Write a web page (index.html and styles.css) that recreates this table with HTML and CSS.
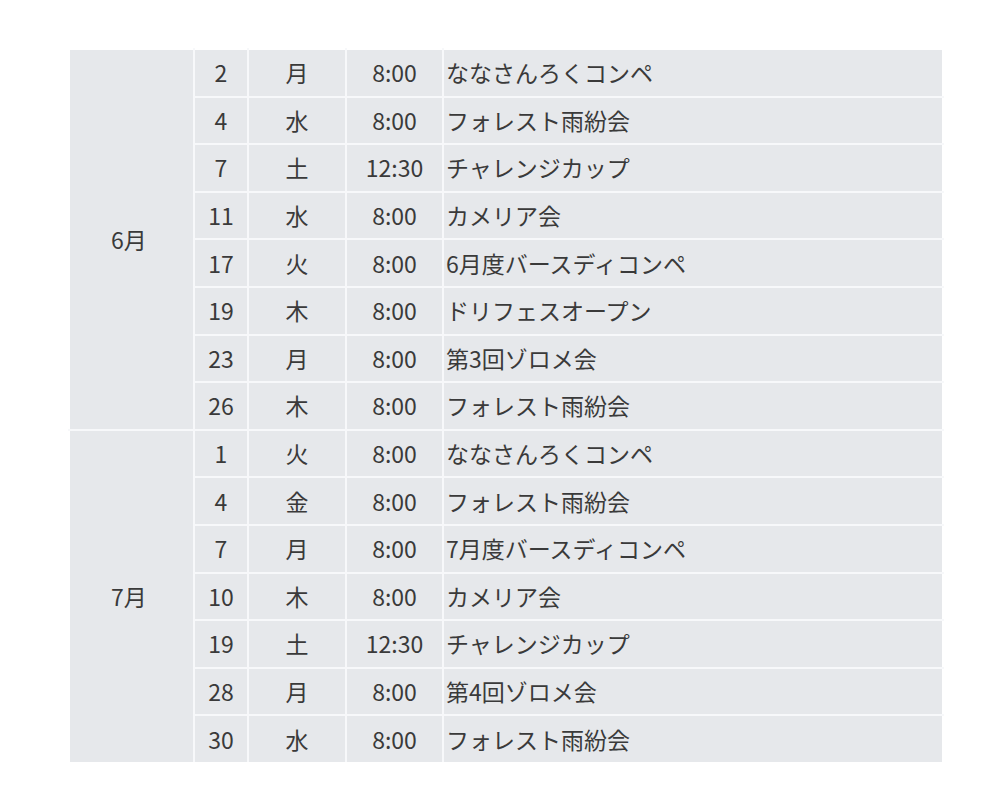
FILE: index.html
```html
<!DOCTYPE html>
<html lang="ja">
<head>
<meta charset="utf-8">
<link rel="stylesheet" href="styles.css">
</head>
<body>
<table class="schedule">
  <colgroup>
    <col class="c-month"><col class="c-day"><col class="c-wd"><col class="c-time"><col class="c-event">
  </colgroup>
  <tbody>
    <tr><td class="month" rowspan="8">6月</td><td>2</td><td>月</td><td>8:00</td><td class="event">ななさんろくコンペ</td></tr>
    <tr><td>4</td><td>水</td><td>8:00</td><td class="event">フォレスト雨紛会</td></tr>
    <tr><td>7</td><td>土</td><td>12:30</td><td class="event">チャレンジカップ</td></tr>
    <tr><td>11</td><td>水</td><td>8:00</td><td class="event">カメリア会</td></tr>
    <tr><td>17</td><td>火</td><td>8:00</td><td class="event">6月度バースディコンペ</td></tr>
    <tr><td>19</td><td>木</td><td>8:00</td><td class="event">ドリフェスオープン</td></tr>
    <tr><td>23</td><td>月</td><td>8:00</td><td class="event">第3回ゾロメ会</td></tr>
    <tr><td>26</td><td>木</td><td>8:00</td><td class="event">フォレスト雨紛会</td></tr>
    <tr><td class="month month-last" rowspan="7">7月</td><td>1</td><td>火</td><td>8:00</td><td class="event">ななさんろくコンペ</td></tr>
    <tr><td>4</td><td>金</td><td>8:00</td><td class="event">フォレスト雨紛会</td></tr>
    <tr><td>7</td><td>月</td><td>8:00</td><td class="event">7月度バースディコンペ</td></tr>
    <tr><td>10</td><td>木</td><td>8:00</td><td class="event">カメリア会</td></tr>
    <tr><td>19</td><td>土</td><td>12:30</td><td class="event">チャレンジカップ</td></tr>
    <tr><td>28</td><td>月</td><td>8:00</td><td class="event">第4回ゾロメ会</td></tr>
    <tr><td>30</td><td>水</td><td>8:00</td><td class="event">フォレスト雨紛会</td></tr>
  </tbody>
</table>
</body>
</html>
```
FILE: styles.css
```css
html, body {
  margin: 0;
  padding: 0;
  background: #ffffff;
}
body {
  font-family: "Noto Sans CJK JP", "Noto Sans", sans-serif;
  color: #3a3a3a;
}
.schedule {
  margin: 48px 0 0 68px;
  border-collapse: collapse;
  table-layout: fixed;
  width: 874px;
  font-size: 23px;
  line-height: 1;
}
.c-month { width: 125px; }
.c-day { width: 54px; }
.c-wd { width: 98px; }
.c-time { width: 97px; }
.c-event { width: 500px; }
.schedule td {
  background: #e6e8eb;
  border: 2px solid #f7f8fa;
  height: 45.6px;
  padding: 0;
  text-align: center;
  vertical-align: middle;
  white-space: nowrap;
}
.schedule tr:first-child td {
  border-top-color: #ffffff;
}
.schedule tr:last-child td,
.schedule td.month-last {
  border-bottom-color: #ffffff;
}
.schedule td.month {
  border-left-color: #ffffff;
  padding-right: 5px;
}
.schedule td.event {
  border-right-color: #ffffff;
  text-align: left;
  padding-left: 2px;
}
```
